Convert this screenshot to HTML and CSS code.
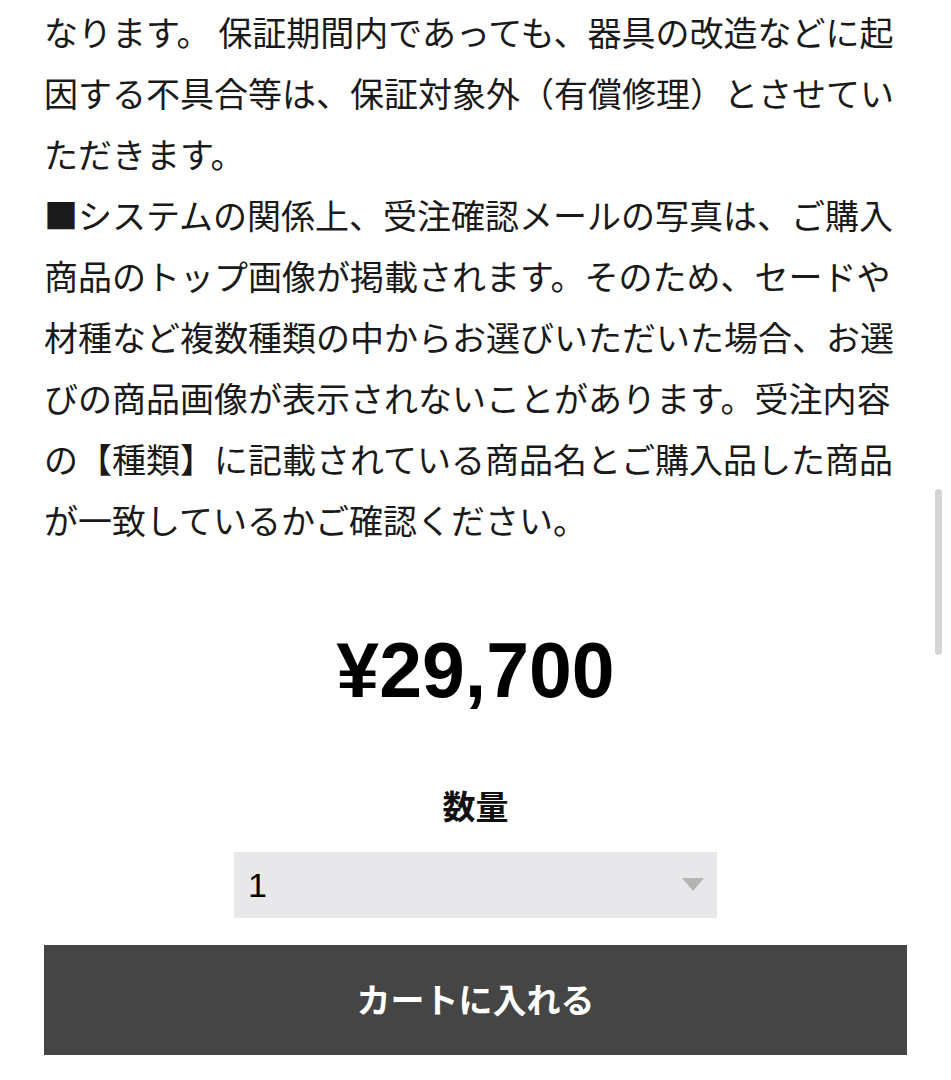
FILE: index.html
```html
<!DOCTYPE html>
<html lang="ja">

<head>
    <meta charset="UTF-8">
    <title>商品詳細</title>
    <link rel="stylesheet" href="styles.css">
</head>

<body>
    <div class="product">
        <p class="notes">なります。 保証期間内であっても、器具の改造などに起因する不具合等は、保証対象外（有償修理）とさせていただきます。<br>■システムの関係上、受注確認メールの写真は、ご購入商品のトップ画像が掲載されます。そのため、セードや材種など複数種類の中からお選びいただいた場合、お選びの商品画像が表示されないことがあります。受注内容の【種類】に記載されている商品名とご購入品した商品が一致しているかご確認ください。</p>

        <div class="price">¥29,700</div>

        <form class="cart-form">
            <label class="qty-label" for="qty">数量</label>
            <div class="qty-select">
                <select id="qty" name="qty">
                    <option>1</option>
                    <option>2</option>
                    <option>3</option>
                    <option>4</option>
                    <option>5</option>
                </select>
                <!-- 下向きの三角 -->
                <svg class="qty-arrow" width="22" height="13" viewBox="0 0 22 13">
                    <path d="M0 0 H22 L11 13 Z" fill="#b4b4b6" />
                </svg>
            </div>
            <button type="button" class="cart-btn">カートに入れる</button>
        </form>
    </div>

    <div class="scroll-thumb"></div>
</body>

</html>
```

FILE: styles.css
```css
body {
    margin: 0;
    background-color: #fff;
    color: #1a1a1a;
    font-family: "Noto Sans CJK JP", "Noto Sans", sans-serif;
}

.product {
    padding: 0 44px;
    display: flex;
    flex-direction: column;
    align-items: center;
}

.notes {
    margin: 1px 0 0;
    align-self: stretch;
    font-size: 34px;
    line-height: 61px;
}

.price {
    margin-top: 80px;
    font-family: "Liberation Sans", Arial, sans-serif;
    font-weight: bold;
    font-size: 77px;
    line-height: 80px;
    color: #000;
}

.cart-form {
    margin-top: 75px;
    align-self: stretch;
    display: flex;
    flex-direction: column;
    align-items: center;
}

.qty-label {
    font-size: 33px;
    font-weight: bold;
    line-height: 40px;
    color: #111;
}

.qty-select {
    position: relative;
    margin-top: 27px;
    width: 483px;
    height: 66px;
}

.qty-select select {
    appearance: none;
    -webkit-appearance: none;
    width: 100%;
    height: 100%;
    border: none;
    border-radius: 0;
    background-color: #e8e8ea;
    padding: 0 14px;
    font-family: "Liberation Sans", Arial, sans-serif;
    font-size: 34px;
    color: #000;
    outline: none;
}

.qty-arrow {
    position: absolute;
    right: 13px;
    top: 26px;
    pointer-events: none;
}

.cart-btn {
    margin-top: 27px;
    align-self: stretch;
    height: 110px;
    padding: 0 0 4px;
    border: none;
    border-radius: 0;
    background-color: #454545;
    color: #fff;
    font-family: "Noto Sans CJK JP", sans-serif;
    font-size: 34px;
    font-weight: bold;
    cursor: pointer;
}

/* iOS風のスクロールバー */
.scroll-thumb {
    position: fixed;
    left: 935px;
    top: 489px;
    width: 7px;
    height: 166px;
    border-radius: 4px;
    background-color: #d4d4d4;
}
```
